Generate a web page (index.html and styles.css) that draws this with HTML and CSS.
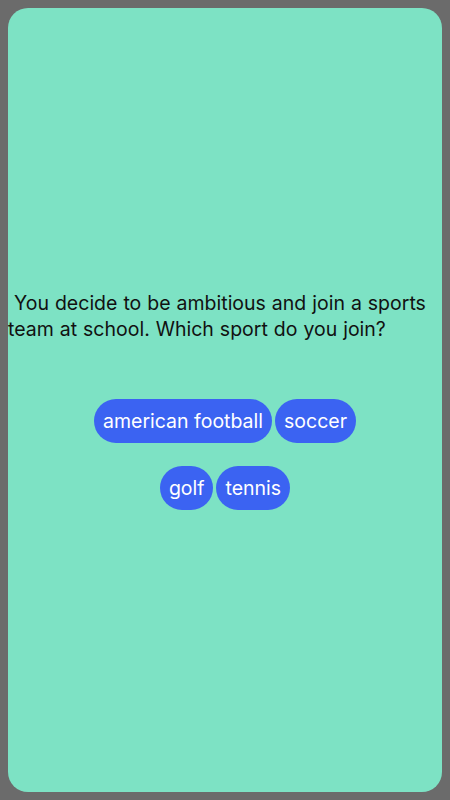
FILE: index.html
```html
<!DOCTYPE html>
<html>
<head>
<meta charset="utf-8">
<link rel="stylesheet" href="styles.css">
</head>
<body>
<div class="card">
  <p class="question">&nbsp;You decide to be ambitious and join a sports team at school. Which sport do you join?</p>
  <div class="choices">
    <div class="row">
      <button class="choice">american football</button>
      <button class="choice">soccer</button>
    </div>
    <div class="row">
      <button class="choice">golf</button>
      <button class="choice">tennis</button>
    </div>
  </div>
</div>
</body>
</html>
```
FILE: styles.css
```css
html, body {
  margin: 0;
  padding: 0;
}
body {
  background: #6b6b6b;
  padding: 8px;
  box-sizing: border-box;
  height: 800px;
  font-family: Inter, "Liberation Sans", sans-serif;
}
.card {
  box-sizing: border-box;
  width: 434px;
  height: 784px;
  background: #7de2c4;
  border-radius: 20px;
  display: flex;
  flex-direction: column;
  justify-content: center;
}
.question {
  margin: 0 0 57px 0;
  font-size: 19.5px;
  line-height: 26px;
  color: #111;
  text-align: left;
  word-spacing: 0.5px;
}
.choices {
  display: flex;
  flex-direction: column;
  gap: 23px;
}
.row {
  display: flex;
  justify-content: center;
  gap: 3px;
}
.choice {
  height: 44px;
  padding: 0 9px;
  border: none;
  border-radius: 22px;
  background: #3b63f2;
  color: #fff;
  font-family: Inter, "Liberation Sans", sans-serif;
  font-size: 19.5px;
}
```
